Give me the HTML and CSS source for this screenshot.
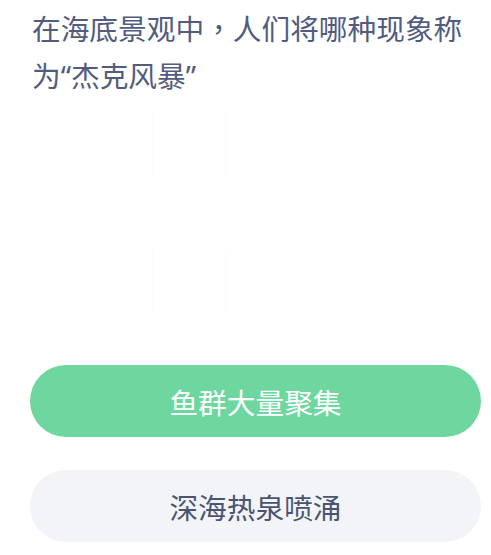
FILE: index.html
```html
<!DOCTYPE html>
<html>
  <head>
    <meta charset="utf-8" />
    <title>答题</title>
    <link rel="stylesheet" href="styles.css">
  </head>
  <body>
    <div class="quiz">
      <h1 class="question">在海底景观中<span class="punct">，</span>人们将哪种现象称为“杰克风暴”</h1>

      <!-- picture area (mostly blank in this shot) -->
      <div class="figure">
        <div class="ghost"></div>
        <div class="ghost"></div>
      </div>

      <div class="options">
        <button class="option correct" type="button">鱼群大量聚集</button>
        <button class="option" type="button">深海热泉喷涌</button>
      </div>
    </div>
  </body>
</html>
```

FILE: styles.css
```css
/* quiz card */
body {
  margin: 0;
  padding: 0;
  background-color: #fff;
  font-family: "Noto Sans CJK SC", "Noto Sans", sans-serif;
}
.quiz {
  padding: 4px 10px 0 30px;
}
.question {
  margin: 0 0 0 2px;
  font-family: "Noto Sans", "Noto Sans CJK SC", sans-serif;
  font-size: 28.7px;
  font-weight: normal;
  line-height: 47px;
  color: #515c7e;
}
/* centred full-width comma */
.punct {
  font-family: "Noto Sans CJK TC", sans-serif;
}
.figure {
  height: 266px;
  display: flex;
  flex-direction: column;
  align-items: flex-start;
  gap: 70px;
  padding: 12px 0 0 122px;
  box-sizing: border-box;
}
.ghost {
  width: 72px;
  height: 68px;
  border-left: 1px solid #fcfcfc;
  border-right: 1px solid #fcfcfc;
}
.options {
  display: flex;
  flex-direction: column;
  gap: 33px;
}
.option {
  display: block;
  width: 100%;
  height: 72px;
  border: none;
  border-radius: 36px;
  background-color: #f3f4f7;
  color: #4a5470;
  font-family: inherit;
  font-size: 28.7px;
  padding: 0;
  cursor: pointer;
}
.option.correct {
  background-color: #6dd79f;
  color: #fff;
}
```
